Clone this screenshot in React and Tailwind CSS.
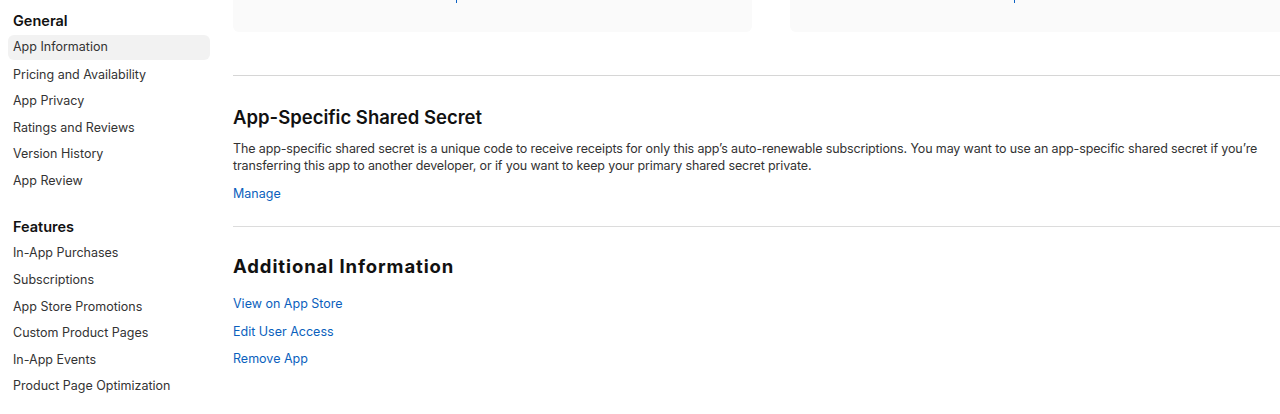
export default function App() {
  const general = ["App Information", "Pricing and Availability", "App Privacy", "Ratings and Reviews", "Version History", "App Review"];
  const features = ["In-App Purchases", "Subscriptions", "App Store Promotions", "Custom Product Pages", "In-App Events", "Product Page Optimization"];
  const font = { fontFamily: "Inter, 'Liberation Sans', sans-serif" };
  return (
    <div className="w-[1280px] h-[414px] overflow-hidden bg-white flex text-[#1d1d1f]" style={font}>
      <aside className="w-[233px] shrink-0 pl-2 pr-[23px]">
        <h3 className="pl-[5px] pt-[10px] h-[35px] text-[14.5px] font-semibold text-[#111]">General</h3>
        <ul>
          {general.map((t, i) => (
            <li key={t} className={`flex items-center pl-[5px] text-[12.5px] text-[#333] rounded-md ${i === 0 ? "bg-[#f2f2f2] h-[25px] mb-[1.6px]" : "h-[26.6px]"}`}>{t}</li>
          ))}
        </ul>
        <h3 className="pl-[5px] pt-[19px] h-[46px] text-[14.5px] font-semibold text-[#111] flex items-center">Features</h3>
        <ul>
          {features.map((t) => (
            <li key={t} className="h-[26.6px] flex items-center pl-[5px] text-[12.5px] text-[#333]">{t}</li>
          ))}
        </ul>
      </aside>
      <main className="w-[1076px] shrink-0">
        <div className="grid grid-cols-2 gap-[38px] h-[32px]">
          <div className="bg-[#fafafa] rounded-b-md relative">
            <span className="absolute left-[223px] top-0 w-[1px] h-[3px] bg-[#0b62c4]" />
          </div>
          <div className="bg-[#fafafa] rounded-b-md relative">
            <span className="absolute left-[224px] top-0 w-[1px] h-[3px] bg-[#0b62c4]" />
          </div>
        </div>
        <div className="mt-[43px] border-t border-[#d6d6d6]" />
        <section className="pt-[28px] pb-[24px]">
          <h2 className="text-[18.5px] font-semibold leading-[26px] text-[#111]">App-Specific Shared Secret</h2>
          <p className="mt-[10px] w-[1047px] text-[12.5px] leading-[17px] tracking-[-0.13px] text-[#333]">
            The app-specific shared secret is a unique code to receive receipts for only this app’s auto-renewable subscriptions. You may want to use an app-specific shared secret if you’re transferring this app to another developer, or if you want to keep your primary shared secret private.
          </p>
          <a className="block mt-[11px] text-[12.5px] leading-[17px] text-[#0b5fbd]">Manage</a>
        </section>
        <div className="border-t border-[#dcdcdc]" />
        <section className="pt-[26px]">
          <h2 className="text-[18.5px] font-bold leading-[26px] tracking-[0.9px] text-[#111]">Additional Information</h2>
          <div className="mt-[16px] flex flex-col gap-[10.5px]">
            {["View on App Store", "Edit User Access", "Remove App"].map((t) => (
              <a key={t} className="block text-[12.5px] leading-[17px] text-[#0b5fbd]">{t}</a>
            ))}
          </div>
        </section>
      </main>
    </div>
  );
}
